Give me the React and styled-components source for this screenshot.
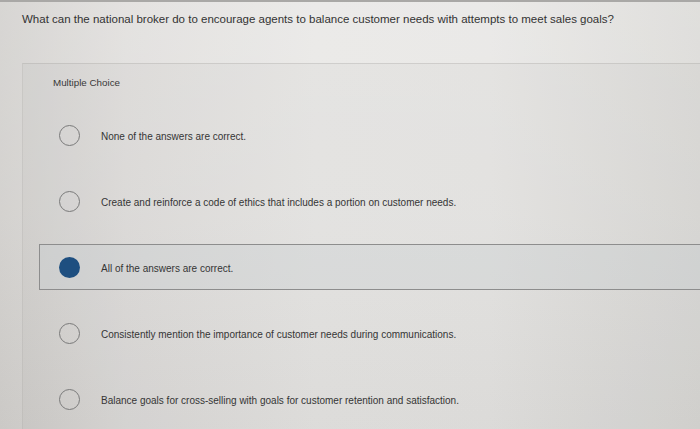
import React from 'react'
import styled, { createGlobalStyle } from 'styled-components'

const GlobalStyle = createGlobalStyle`
  html, body {
    margin: 0;
    padding: 0;
  }
  body {
    width: 700px;
    height: 429px;
    overflow: hidden;
    font-family: "Liberation Sans", Arial, sans-serif;
    background: linear-gradient(90deg, #cfcdca 0%, #dedcda 18%, #e7e6e4 45%, #e6e5e3 70%, #d9d8d5 100%);
    border-top: 2px solid #a9a8a6;
  }
`

const Page = styled.div`
  height: 427px;
  padding-left: 22px;
  box-sizing: border-box;
  background: linear-gradient(180deg, rgba(255, 255, 255, 0.18) 0%, rgba(255, 255, 255, 0.1) 50%, rgba(0, 0, 0, 0.02) 100%);
`

const Question = styled.h1`
  margin: 0;
  padding-top: 11px;
  height: 50px;
  font-size: 11.5px;
  font-weight: normal;
  color: #333;
`

const Panel = styled.section`
  padding: 13px 0 0 16px;
  height: 366px;
  box-sizing: border-box;
  background: rgba(120, 115, 110, 0.05);
  border-top: 1px solid rgba(160, 158, 154, 0.3);
  border-left: 1px solid rgba(160, 158, 154, 0.2);
`

const Label = styled.div`
  padding-left: 14px;
  height: 35px;
  font-size: 9.8px;
  color: #383838;
`

const OptionList = styled.ul`
  list-style: none;
  margin: 0;
  padding: 0;
  display: flex;
  flex-direction: column;
  gap: 20px;
`

const Option = styled.li`
  display: flex;
  align-items: center;
  height: 46px;
  box-sizing: border-box;
  padding-left: 19px;
  border: 1px solid ${p => (p.$selected ? '#8d8d8d' : 'transparent')};
  border-right: none;
  background: ${p => (p.$selected ? 'rgba(200, 205, 210, 0.35)' : 'transparent')};
`

const Radio = styled.span`
  flex: none;
  width: 21px;
  height: 21px;
  border-radius: 50%;
  box-sizing: border-box;
  border: ${p => (p.$checked ? 'none' : '1.5px solid #7a7a7a')};
  background: ${p => (p.$checked ? '#1e4f80' : 'transparent')};
`

const OptionText = styled.span`
  margin-left: 21px;
  margin-top: 2px;
  font-size: 10px;
  color: #353535;
`

const options = [
  'None of the answers are correct.',
  'Create and reinforce a code of ethics that includes a portion on customer needs.',
  'All of the answers are correct.',
  'Consistently mention the importance of customer needs during communications.',
  'Balance goals for cross-selling with goals for customer retention and satisfaction.',
]

export default function App() {
  const selected = 2
  return (
    <>
      <GlobalStyle />
      <Page>
        <Question>
          What can the national broker do to encourage agents to balance customer needs with attempts to meet sales goals?
        </Question>
        <Panel>
          <Label>Multiple Choice</Label>
          <OptionList>
            {options.map((text, idx) => (
              <Option key={idx} $selected={idx === selected}>
                <Radio $checked={idx === selected} />
                <OptionText>{text}</OptionText>
              </Option>
            ))}
          </OptionList>
        </Panel>
      </Page>
    </>
  )
}
